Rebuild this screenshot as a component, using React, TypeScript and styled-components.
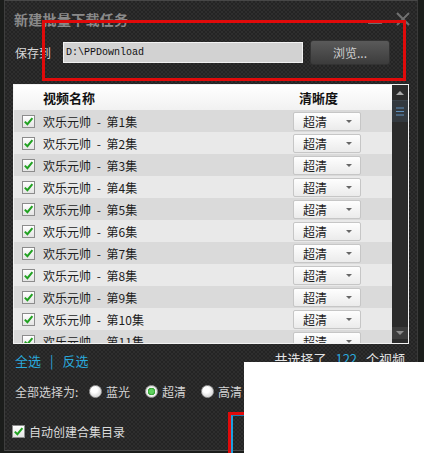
import styled, { createGlobalStyle } from 'styled-components';

const GlobalStyle = createGlobalStyle`
  html, body {
    margin: 0;
    padding: 0;
    background: #1b1d1b;
  }
  * {
    box-sizing: border-box;
  }
`;

const cjk = `"Noto Sans CJK SC", "Noto Sans", sans-serif`;
const accent = '#2aa9dc';

const Screen = styled.div`
  position: relative;
  width: 424px;
  height: 453px;
  overflow: hidden;
  background: #1b1d1b;
  font-family: ${cjk};
`;

const Dialog = styled.div`
  margin-left: 4px;
  width: 414px;
  height: 451px;
  border-left: 1px solid #3e3e3e;
  border-top: 1px solid #474747;
  border-right: 1px solid #3a3a3a;
  border-bottom: 1px solid #4a4a4a;
  background-color: #292929;
  background-image: repeating-conic-gradient(#2e2e2e 0 25%, #242424 0 50%);
  background-size: 4px 4px;
  display: flex;
  flex-direction: column;
`;

const TitleBar = styled.div`
  height: 36px;
  display: flex;
  align-items: center;
  padding: 0 7px 0 9px;
`;

const Title = styled.span`
  font-size: 14px;
  font-weight: 700;
  color: #8a8a8a;
  letter-spacing: 0.3px;
`;

const WindowControls = styled.div`
  margin-left: auto;
  display: flex;
  align-items: center;
  gap: 14px;
`;

const MinimizeBar = styled.span`
  width: 14px;
  height: 2px;
  margin-top: 8px;
  background: #6e6e6e;
`;

const SaveRow = styled.div`
  margin-top: 3px;
  height: 25px;
  display: flex;
  align-items: center;
  padding-left: 10px;
`;

const FieldLabel = styled.span`
  width: 48px;
  font-size: 12px;
  color: #d8d8d8;
`;

const PathInput = styled.div`
  width: 240px;
  height: 21px;
  background: #d2d2d2;
  border: 1px solid #f2f2f2;
  display: flex;
  align-items: center;
  padding-left: 2px;
  font-family: "Liberation Mono", monospace;
  font-size: 10px;
  color: #111;
`;

const BrowseButton = styled.div`
  margin-left: 7px;
  width: 80px;
  height: 25px;
  border-radius: 3px;
  background: linear-gradient(#5a5a5a, #3c3c3c);
  border: 1px solid #333;
  display: flex;
  align-items: center;
  justify-content: center;
  font-size: 12px;
  color: #cfcfcf;
`;

const ListPanel = styled.div`
  margin: 19px 0 0 8px;
  width: 396px;
  height: 260px;
  border: 1px solid #f2f2f2;
  display: flex;
  overflow: hidden;
`;

const ListBody = styled.div`
  flex: 1;
  display: flex;
  flex-direction: column;
  overflow: hidden;
`;

const HeaderRow = styled.div`
  flex: none;
  height: 25px;
  display: flex;
  align-items: center;
  background: linear-gradient(#ffffff, #f1f1f1);
  font-size: 13px;
  font-weight: 700;
  color: #111;
`;

const NameHeader = styled.span`
  padding-left: 29px;
  flex: 1;
`;

const QualityHeader = styled.span`
  width: 93px;
`;

const Row = styled.div<{ $alt: boolean }>`
  flex: none;
  height: 22px;
  display: flex;
  align-items: center;
  padding-left: 8px;
  background: ${({ $alt }) => ($alt ? '#e9e9e9' : '#dadada')};
  font-size: 12px;
  color: #1d1d1d;
`;

const RowName = styled.span`
  flex: 1;
  margin-left: 8px;
  word-spacing: 3px;
`;

const CheckBox = styled.span`
  flex: none;
  width: 13px;
  height: 13px;
  border: 1px solid #8c8c8c;
  background: linear-gradient(#ffffff, #e4e4e4);
  display: flex;
  align-items: center;
  justify-content: center;
`;

const Dropdown = styled.div`
  width: 68px;
  height: 19px;
  margin-right: 31px;
  border: 1px solid #c6c6c6;
  border-radius: 2px;
  background: linear-gradient(#fefefe, #ebebeb);
  display: flex;
  align-items: center;
  padding: 0 8px 0 9px;
  font-size: 12px;
  color: #222;
`;

const Caret = styled.span`
  margin-left: auto;
  width: 0;
  height: 0;
  border-left: 3.5px solid transparent;
  border-right: 3.5px solid transparent;
  border-top: 3px solid #666;
`;

const Scrollbar = styled.div`
  flex: none;
  width: 16px;
  background: #2b2b2b;
  display: flex;
  flex-direction: column;
`;

const ScrollArrow = styled.div<{ $down?: boolean }>`
  height: ${({ $down }) => ($down ? '12px' : '15px')};
  display: flex;
  align-items: center;
  justify-content: center;
  background: ${({ $down }) => ($down ? '#3c3c3c' : '#2b2b2b')};
  margin-top: ${({ $down }) => ($down ? 'auto' : '0')};
  margin-bottom: ${({ $down }) => ($down ? '4px' : '0')};

  &::after {
    content: '';
    border-left: 4px solid transparent;
    border-right: 4px solid transparent;
    ${({ $down }) => ($down ? 'border-top: 4px solid #8d8d8d;' : 'border-bottom: 4px solid #a9a9a9;')}
  }
`;

const ScrollThumb = styled.div`
  height: 22px;
  background: #33393f;
  border-top: 1px solid #3c444c;
  display: flex;
  align-items: center;
  justify-content: center;
`;

const LinkRow = styled.div`
  margin-top: 6px;
  height: 20px;
  display: flex;
  align-items: center;
  padding: 0 12px 0 10px;
  font-size: 13px;
`;

const Link = styled.span`
  color: ${accent};
`;

const Divider = styled.span`
  color: ${accent};
  margin: 0 9px;
`;

const Summary = styled.span`
  margin-left: auto;
  margin-top: -4px;
  color: #e6e6e6;
  word-spacing: 6px;
`;

const Count = styled.span`
  color: ${accent};
`;

const QualityRow = styled.div`
  margin-top: 11px;
  height: 20px;
  display: flex;
  align-items: center;
  padding-left: 10px;
  font-size: 12px;
  color: #d4d4d4;
`;

const QualityLabel = styled.span`
  width: 74px;
`;

const RadioOption = styled.span`
  display: flex;
  align-items: center;
  gap: 4px;
  margin-right: 15px;
  font-size: 12px;
`;

const Radio = styled.span<{ $on?: boolean }>`
  width: 13px;
  height: 13px;
  border-radius: 50%;
  border: 1px solid #a0a0a0;
  background: ${({ $on }) =>
    $on
      ? 'radial-gradient(circle, #5fd15f 0 2px, #2c9a2c 3.5px, #f4f4f4 4px, #dcdcdc 6px)'
      : 'radial-gradient(circle at 40% 35%, #ffffff 0 3px, #e2e2e2 6px)'};
`;

const FolderRow = styled.div`
  margin-top: 20px;
  height: 20px;
  display: flex;
  align-items: center;
  gap: 4px;
  padding-left: 7px;
  font-size: 12px;
  color: #dcdcdc;
`;

const Highlight = styled.div<{ $left: number; $top: number; $w: number; $h: number }>`
  position: absolute;
  left: ${({ $left }) => $left}px;
  top: ${({ $top }) => $top}px;
  width: ${({ $w }) => $w}px;
  height: ${({ $h }) => $h}px;
  border: 3px solid #e10a0a;
`;

const ConfirmButtonEdge = styled.div`
  position: absolute;
  left: 231px;
  top: 415px;
  width: 20px;
  height: 40px;
  border-left: 2px solid #1e9fdc;
  border-top: 1px solid #1a7fb4;
`;

const Cover = styled.div`
  position: absolute;
  left: 244px;
  top: 362px;
  width: 180px;
  height: 91px;
  background: #ffffff;
`;

function Check() {
  return (
    <svg width="11" height="11" viewBox="0 0 11 11">
      <path d="M1.8 5.6 L4.4 8.2 L9.4 2.2" fill="none" stroke="#21a121" strokeWidth="2" />
    </svg>
  );
}

function CloseIcon() {
  return (
    <svg width="14" height="14" viewBox="0 0 14 14">
      <path d="M1 1 L13 13 M13 1 L1 13" stroke="#707070" strokeWidth="2" />
    </svg>
  );
}

function ThumbLines() {
  return (
    <svg width="8" height="9" viewBox="0 0 8 9">
      <path d="M0 1 H8 M0 4.5 H8 M0 8 H8" stroke="#5e8fbd" strokeWidth="1" />
    </svg>
  );
}

const episodes = Array.from({ length: 11 }, (_, i) => i + 1);

export default function App() {
  return (
    <>
      <GlobalStyle />
      <Screen>
        <Dialog>
          <TitleBar>
            <Title>新建批量下载任务</Title>
            <WindowControls>
              <MinimizeBar />
              <CloseIcon />
            </WindowControls>
          </TitleBar>

          <SaveRow>
            <FieldLabel>保存到</FieldLabel>
            <PathInput>D:\PPDownload</PathInput>
            <BrowseButton>浏览...</BrowseButton>
          </SaveRow>

          <ListPanel>
            <ListBody>
              <HeaderRow>
                <NameHeader>视频名称</NameHeader>
                <QualityHeader>清晰度</QualityHeader>
              </HeaderRow>
              {episodes.map((n) => (
                <Row key={n} $alt={n % 2 === 0}>
                  <CheckBox>
                    <Check />
                  </CheckBox>
                  <RowName>欢乐元帅 - 第{n}集</RowName>
                  <Dropdown>
                    超清
                    <Caret />
                  </Dropdown>
                </Row>
              ))}
            </ListBody>
            <Scrollbar>
              <ScrollArrow />
              <ScrollThumb>
                <ThumbLines />
              </ScrollThumb>
              <ScrollArrow $down />
            </Scrollbar>
          </ListPanel>

          <LinkRow>
            <Link>全选</Link>
            <Divider>|</Divider>
            <Link>反选</Link>
            <Summary>
              共选择了 <Count>122</Count> 个视频
            </Summary>
          </LinkRow>

          <QualityRow>
            <QualityLabel>全部选择为:</QualityLabel>
            <RadioOption>
              <Radio />
              蓝光
            </RadioOption>
            <RadioOption>
              <Radio $on />
              超清
            </RadioOption>
            <RadioOption>
              <Radio />
              高清
            </RadioOption>
          </QualityRow>

          <FolderRow>
            <CheckBox>
              <Check />
            </CheckBox>
            自动创建合集目录
          </FolderRow>
        </Dialog>

        <Highlight $left={42} $top={20} $w={364} $h={61} />
        <ConfirmButtonEdge />
        <Highlight $left={228} $top={412} $w={80} $h={60} />
        <Cover />
      </Screen>
    </>
  );
}
